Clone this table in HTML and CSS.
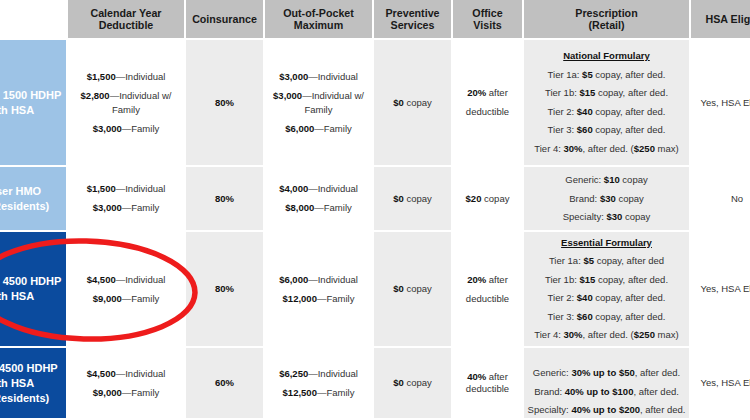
FILE: index.html
```html
<!DOCTYPE html>
<html>
<head>
<meta charset="utf-8">
<link rel="stylesheet" href="styles.css">
</head>
<body>
<div class="sheet">
  <div class="grid">
    <div class="cell blank"></div>
    <div class="cell head">Calendar Year<br>Deductible</div>
    <div class="cell head">Coinsurance</div>
    <div class="cell head">Out-of-Pocket<br>Maximum</div>
    <div class="cell head">Preventive<br>Services</div>
    <div class="cell head">Office<br>Visits</div>
    <div class="cell head">Prescription<br>(Retail)</div>
    <div class="cell head">HSA Eligible</div>

    <div class="cell plan light">Anthem 1500 HDHP<br>with HSA</div>
    <div class="cell w">
      <p><b>$1,500</b>—Individual</p>
      <p><b>$2,800</b>—Individual w/<br>Family</p>
      <p><b>$3,000</b>—Family</p>
    </div>
    <div class="cell g"><p><b>80%</b></p></div>
    <div class="cell w">
      <p><b>$3,000</b>—Individual</p>
      <p><b>$3,000</b>—Individual w/<br>Family</p>
      <p><b>$6,000</b>—Family</p>
    </div>
    <div class="cell g"><p><b>$0</b> copay</p></div>
    <div class="cell w wide"><p><b>20%</b> after</p><p>deductible</p></div>
    <div class="cell g rx">
      <p class="title">National Formulary</p>
      <p>Tier 1a: <b>$5</b> copay, after ded.</p>
      <p>Tier 1b: <b>$15</b> copay, after ded.</p>
      <p>Tier 2: <b>$40</b> copay, after ded.</p>
      <p>Tier 3: <b>$60</b> copay, after ded.</p>
      <p>Tier 4: <b>30%</b>, after ded. (<b>$250</b> max)</p>
    </div>
    <div class="cell w"><p>Yes, HSA Eligible</p></div>

    <div class="cell plan light">Kaiser HMO<br>(CA Residents)</div>
    <div class="cell w">
      <p><b>$1,500</b>—Individual</p>
      <p><b>$3,000</b>—Family</p>
    </div>
    <div class="cell g"><p><b>80%</b></p></div>
    <div class="cell w">
      <p><b>$4,000</b>—Individual</p>
      <p><b>$8,000</b>—Family</p>
    </div>
    <div class="cell g"><p><b>$0</b> copay</p></div>
    <div class="cell w"><p><b>$20</b> copay</p></div>
    <div class="cell g rx">
      <p>Generic: <b>$10</b> copay</p>
      <p>Brand: <b>$30</b> copay</p>
      <p>Specialty: <b>$30</b> copay</p>
    </div>
    <div class="cell w"><p>No</p></div>

    <div class="cell plan dark">Anthem 4500 HDHP<br>with HSA</div>
    <div class="cell w">
      <p><b>$4,500</b>—Individual</p>
      <p><b>$9,000</b>—Family</p>
    </div>
    <div class="cell g"><p><b>80%</b></p></div>
    <div class="cell w">
      <p><b>$6,000</b>—Individual</p>
      <p><b>$12,000</b>—Family</p>
    </div>
    <div class="cell g"><p><b>$0</b> copay</p></div>
    <div class="cell w wide"><p><b>20%</b> after</p><p>deductible</p></div>
    <div class="cell g rx">
      <p class="title">Essential Formulary</p>
      <p>Tier 1a: <b>$5</b> copay, after ded</p>
      <p>Tier 1b: <b>$15</b> copay, after ded.</p>
      <p>Tier 2: <b>$40</b> copay, after ded.</p>
      <p>Tier 3: <b>$60</b> copay, after ded.</p>
      <p>Tier 4: <b>30%</b>, after ded. (<b>$250</b> max)</p>
    </div>
    <div class="cell w"><p>Yes, HSA Eligible</p></div>

    <div class="cell plan dark">Kaiser 4500 HDHP<br>with HSA<br>(CA Residents)</div>
    <div class="cell w">
      <p><b>$4,500</b>—Individual</p>
      <p><b>$9,000</b>—Family</p>
    </div>
    <div class="cell g"><p><b>60%</b></p></div>
    <div class="cell w">
      <p><b>$6,250</b>—Individual</p>
      <p><b>$12,500</b>—Family</p>
    </div>
    <div class="cell g"><p><b>$0</b> copay</p></div>
    <div class="cell w tight"><p><b>40%</b> after<br>deductible</p></div>
    <div class="cell g rx low">
      <p>Generic: <b>30% up to $50</b>, after ded.</p>
      <p>Brand: <b>40% up to $100</b>, after ded.</p>
      <p>Specialty: <b>40% up to $200</b>, after ded.</p>
    </div>
    <div class="cell w"><p>Yes, HSA Eligible</p></div>
  </div>

  <svg class="mark" width="260" height="130" viewBox="0 0 260 130">
    <ellipse cx="125" cy="62" rx="110" ry="49" fill="none" stroke="#ee1c1c" stroke-width="5.5" transform="rotate(1.5 125 62)"/>
  </svg>
</div>
</body>
</html>
```

FILE: styles.css
```css
html, body {
  margin: 0;
  padding: 0;
  background: #ffffff;
  overflow: hidden;
  width: 750px;
  height: 420px;
}

.sheet {
  position: relative;
  width: 750px;
  height: 420px;
  overflow: hidden;
  font-family: "Liberation Sans", Arial, sans-serif;
  color: #333333;
}

.grid {
  display: grid;
  grid-template-columns: 112px 116px 77px 107px 77px 69px 165px 92px;
  grid-template-rows: 38px 125px 63px 114px 70px;
  gap: 2px;
  margin-left: -46px;
  width: 829px;
}

.cell {
  display: flex;
  flex-direction: column;
  justify-content: center;
  align-items: center;
  text-align: center;
  gap: 5px;
  font-size: 9.5px;
  line-height: 14px;
}

.cell p {
  margin: 0;
}

.cell b {
  color: #111111;
}

.blank {
  background: #ffffff;
}

.head {
  background: #c0c0c0;
  color: #1a1a1a;
  font-weight: bold;
  font-size: 10.7px;
  line-height: 12px;
}

.plan {
  color: #ffffff;
  font-weight: bold;
  font-size: 11px;
  line-height: 15px;
}

.light {
  background: #9dc3e6;
}

.dark {
  background: #0b4b9e;
}

.w {
  background: #ffffff;
}

.g {
  background: #ececec;
}

.wide {
  gap: 5px;
}

.tight {
  line-height: 12.5px;
}

.rx {
  gap: 4.6px;
}

.low {
  padding-top: 17px;
  box-sizing: border-box;
}

.title {
  font-weight: bold;
  color: #111111;
  text-decoration: underline;
}

.mark {
  position: absolute;
  left: -40px;
  top: 228px;
}
```
